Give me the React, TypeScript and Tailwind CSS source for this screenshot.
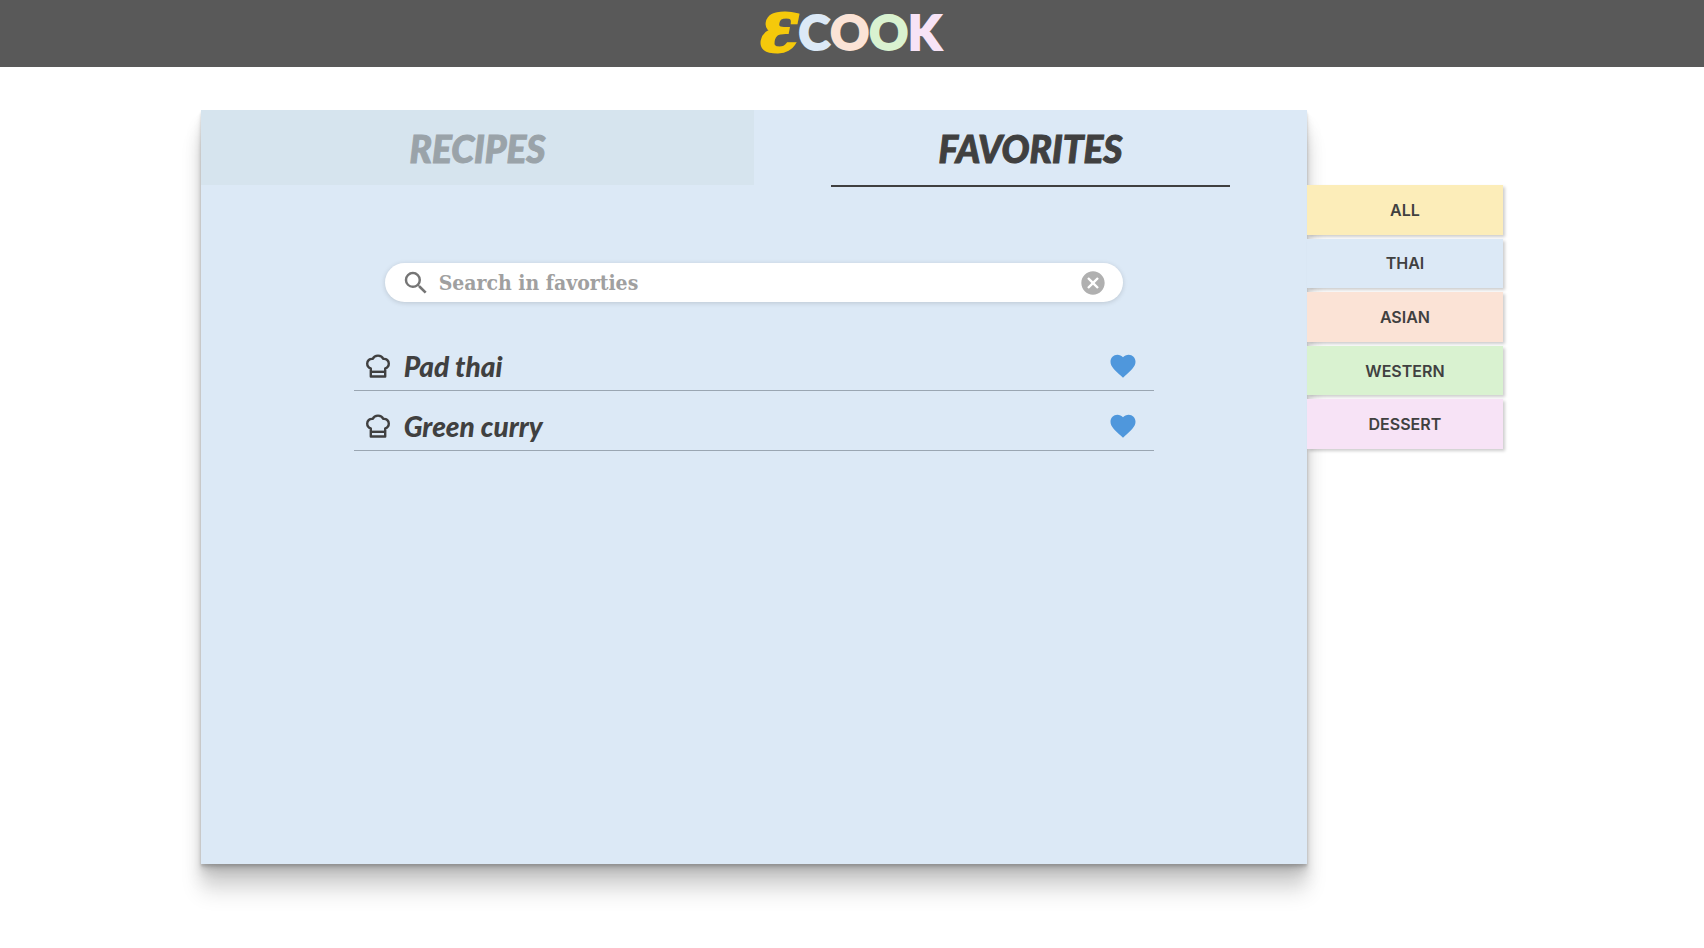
import { useState } from "react";
import { MdCancel, MdFavorite, MdSearch } from "react-icons/md";

const categories = [
  { name: "ALL", color: "bg-[#fcedb9]" },
  { name: "THAI", color: "bg-[#dce9f6]" },
  { name: "ASIAN", color: "bg-[#fbe3d6]" },
  { name: "WESTERN", color: "bg-[#d9f2d0]" },
  { name: "DESSERT", color: "bg-[#f7e3f6]" },
];

const favorites = ["Pad thai", "Green curry"];

function ChefHat() {
  return (
    <svg
      viewBox="0 0 24 24"
      className="mr-3.5 size-6"
      fill="none"
      stroke="currentColor"
      strokeWidth="2.4"
      strokeLinejoin="round"
      aria-hidden="true"
    >
      <path d="M4.8 22.5V14.4C2.6 13.8 1.2 12 1.2 9.6C1.2 6.6 3.6 4.6 6.6 4.9C7.6 2.8 9.6 1.6 12 1.6C14.4 1.6 16.4 2.8 17.4 4.9C20.4 4.6 22.8 6.6 22.8 9.6C22.8 12 21.4 13.8 19.2 14.4V22.5Z" />
      <path d="M5 17.8H19" />
    </svg>
  );
}

function Header() {
  return (
    <header className="flex h-[67px] items-center justify-center bg-[#595959]">
      <h1 className="flex items-center pr-2 pb-1 font-['Lato',sans-serif] text-5xl leading-none font-black">
        <span className="px-1 pt-1 font-['DejaVu_Serif',serif] text-[50px] font-bold text-[#f5c90b] italic [-webkit-text-stroke:4px_#f5c90b]">
          Ɛ
        </span>
        <span className="text-[#dce9f6] [-webkit-text-stroke:2px_#dce9f6]">C</span>
        <span className="text-[#fbe3d6] [-webkit-text-stroke:2px_#fbe3d6]">O</span>
        <span className="text-[#d9f2d0] [-webkit-text-stroke:2px_#d9f2d0]">O</span>
        <span className="text-[#f7e3f6] [-webkit-text-stroke:2px_#f7e3f6]">K</span>
      </h1>
    </header>
  );
}

function SearchBar() {
  const [query, setQuery] = useState("");
  return (
    <form
      className="mx-auto mt-[78px] flex h-[39px] w-[66.8%] items-center rounded-full bg-white px-4 shadow-[0_1px_5px_rgba(0,0,0,0.15)]"
      onSubmit={(e) => e.preventDefault()}
    >
      <MdSearch className="size-[30px] shrink-0 text-[#757575]" />
      <input
        aria-label="Search in favorties"
        className="ml-2 min-w-0 flex-1 bg-transparent font-['DejaVu_Serif_Condensed','DejaVu_Serif',serif] text-[21px] font-bold text-[#404040] outline-none placeholder:text-[#a0a0a0]"
        placeholder="Search in favorties"
        value={query}
        onChange={(e) => setQuery(e.target.value)}
      />
      <button type="button" aria-label="Clear search" onClick={() => setQuery("")}>
        <MdCancel className="size-7 text-[#b0b0b0]" />
      </button>
    </form>
  );
}

export default function App() {
  return (
    <div className="min-h-screen bg-white">
      <Header />
      <div className="flex items-start justify-center pt-[43px]">
        <main className="h-[754px] w-[64.9%] bg-[#dce9f6] shadow-[0_2px_2px_rgba(0,0,0,0.11),0_4px_4px_rgba(0,0,0,0.11),0_8px_8px_rgba(0,0,0,0.09),0_16px_16px_rgba(0,0,0,0.1),0_28px_20px_rgba(0,0,0,0.12)]">
          <nav className="grid h-[75px] grid-cols-2 font-['Lato',sans-serif] text-[37px] font-black italic">
            <button type="button" className="bg-[#d6e4ee] pt-0.5 text-[#9aa3a9] [-webkit-text-stroke:1px_#9aa3a9]">
              RECIPES
            </button>
            <button type="button" className="relative pt-0.5 text-[#404040] [-webkit-text-stroke:1px_#404040]">
              FAVORITES
              <span className="absolute inset-x-[14%] top-full h-0.5 bg-[#404040]" />
            </button>
          </nav>
          <SearchBar />
          <ul className="mx-auto mt-[29px] w-[72.4%]">
            {favorites.map((name) => (
              <li key={name} className="flex h-[60px] items-end border-b border-[#9aa6b2] px-3">
                <a
                  href="#"
                  className="flex h-12 flex-1 items-center font-['Lato',sans-serif] text-[28px] font-black text-[#404040] italic"
                >
                  <ChefHat />
                  {name}
                </a>
                <button
                  type="button"
                  aria-label={`Remove ${name} from favorites`}
                  className="flex h-12 items-center px-1"
                >
                  <MdFavorite className="size-[30px] text-[#4f97dc]" />
                </button>
              </li>
            ))}
          </ul>
        </main>
        <aside className="mt-[75px] grid h-[264px] w-[196px] grid-rows-5 gap-1">
          {categories.map((c) => (
            <button
              key={c.name}
              type="button"
              className={`${c.color} font-['Inter',sans-serif] text-base font-semibold text-[#404040] shadow-[2px_2px_3px_rgba(0,0,0,0.2)]`}
            >
              {c.name}
            </button>
          ))}
        </aside>
      </div>
    </div>
  );
}
